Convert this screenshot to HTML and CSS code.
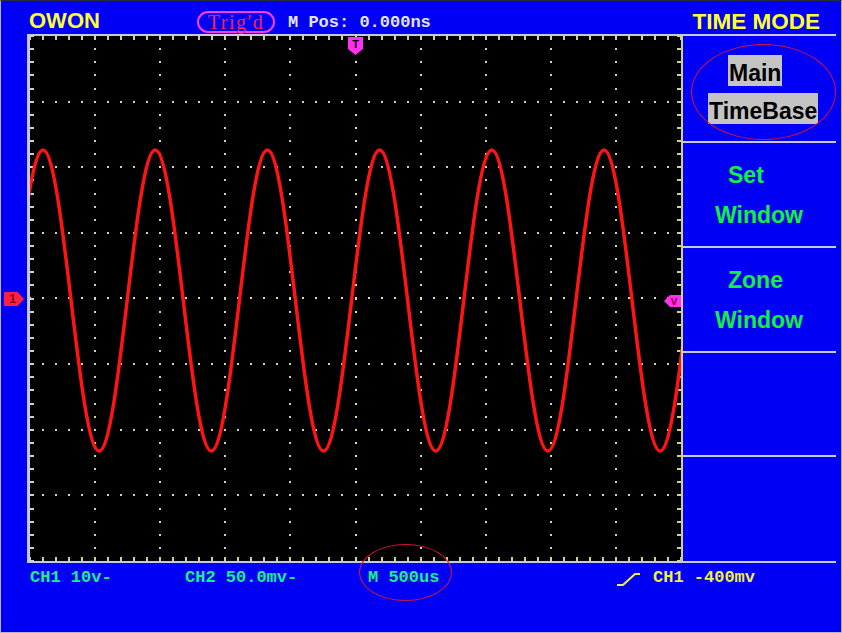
FILE: index.html
```html
<!DOCTYPE html>
<html>
<head>
<meta charset="utf-8">
<link rel="stylesheet" href="styles.css">
</head>
<body>
<div class="screen">
  <header class="topbar">
    <span class="brand">OWON</span>
    <span class="trig">Trig'd</span>
    <span class="mpos">M Pos: 0.000ns</span>
    <span class="mode">TIME MODE</span>
  </header>
  <main class="body">
    <span class="ch-marker">1</span>
    <div class="scope">
      <svg class="grid" width="651" height="525" viewBox="0 0 651 525">
        <line class="tk-h tk-top" x1="0" y1="2" x2="651" y2="2"/>
        <line class="tk-h tk-bot" x1="0" y1="523" x2="651" y2="523"/>
        <line class="tk-v tk-left" x1="2" y1="0" x2="2" y2="525"/>
        <line class="tk-v tk-right" x1="649" y1="0" x2="649" y2="525"/>
        <line class="dv" x1="65" y1="0" x2="65" y2="525"/>
        <line class="dv" x1="130" y1="0" x2="130" y2="525"/>
        <line class="dv" x1="195" y1="0" x2="195" y2="525"/>
        <line class="dv" x1="260" y1="0" x2="260" y2="525"/>
        <line class="dv dc" x1="326" y1="0" x2="326" y2="525"/>
        <line class="dv" x1="391" y1="0" x2="391" y2="525"/>
        <line class="dv" x1="456" y1="0" x2="456" y2="525"/>
        <line class="dv" x1="521" y1="0" x2="521" y2="525"/>
        <line class="dv" x1="586" y1="0" x2="586" y2="525"/>
        <line class="dh" x1="0" y1="66" x2="651" y2="66"/>
        <line class="dh" x1="0" y1="131" x2="651" y2="131"/>
        <line class="dh" x1="0" y1="197" x2="651" y2="197"/>
        <line class="dh dc" x1="0" y1="262" x2="651" y2="262"/>
        <line class="dh" x1="0" y1="328" x2="651" y2="328"/>
        <line class="dh" x1="0" y1="394" x2="651" y2="394"/>
        <line class="dh" x1="0" y1="459" x2="651" y2="459"/>
        <path class="wave" d="M-43.1 415 C-22.7 415 -7.4 114 13 114 S48.7 415 69.1 415 S104.8 114 125.2 114 S160.9 415 181.3 415 S217 114 237.4 114 S273.1 415 293.5 415 S329.2 114 349.6 114 S385.3 415 405.7 415 S441.4 114 461.8 114 S497.5 415 517.9 415 S553.6 114 574 114 S609.7 415 630.1 415 S665.8 114 686.2 114"/>
        <polygon class="mk-t" points="318,1 333,1 333,13 325.5,19 318,13"/>
        <text class="mk-t-label" x="325.5" y="12">T</text>
        <polygon class="mk-v" points="634,265 640,259 651,259 651,271 640,271"/>
        <text class="mk-v-label" x="644" y="269">v</text>
      </svg>
    </div>
    <nav class="menu">
      <div class="item item-sel">
        <span class="hl hl-main">Main</span>
        <span class="hl hl-tb">TimeBase</span>
      </div>
      <div class="item">
        <span class="l1">Set</span>
        <span class="l2">Window</span>
      </div>
      <div class="item">
        <span class="l1">Zone</span>
        <span class="l2">Window</span>
      </div>
      <div class="item"></div>
      <div class="item last"></div>
    </nav>
  </main>
  <footer class="status">
    <span class="st">CH1 10v-</span>
    <span class="st">CH2 50.0mv-</span>
    <span class="st">M 500us</span>
    <svg class="edge" width="25" height="16" viewBox="0 0 25 16"><path d="M1 14 H7 L19 3 H24"/></svg>
    <span class="st trg">CH1 -400mv</span>
  </footer>
  <div class="ring ring-menu"></div>
  <div class="ring ring-tb"></div>
</div>
</body>
</html>
```

FILE: styles.css
```css
* { box-sizing: border-box; }
html, body { margin: 0; padding: 0; background: #0000f6; }

.screen {
  position: relative;
  width: 842px;
  height: 633px;
  background: #0000f6;
  border: 1px solid #b4b4d4;
  border-top-color: #2a2a3a;
  overflow: hidden;
  font-family: "Liberation Sans", Arial, sans-serif;
}

/* header */
.topbar {
  height: 33px;
  display: flex;
  align-items: flex-start;
  padding-left: 28px;
}
.brand {
  width: 168px;
  margin-top: 9px;
  font-weight: bold;
  font-size: 22px;
  line-height: 22px;
  color: #ffff30;
}
.trig {
  margin-top: 10px;
  width: 78px;
  height: 22px;
  border: 2px solid #ff3cff;
  border-radius: 11px;
  display: flex;
  align-items: center;
  justify-content: center;
  font-family: "Liberation Serif", serif;
  font-size: 20px;
  letter-spacing: 1.5px;
  line-height: 18px;
  color: #ff1e50;
}
.mpos {
  margin-left: 13px;
  margin-top: 12px;
  font-family: "Liberation Mono", monospace;
  font-weight: bold;
  font-size: 17px;
  line-height: 20px;
  color: #e4e4ec;
}
.mode {
  margin-left: auto;
  margin-right: 21px;
  margin-top: 10px;
  font-weight: bold;
  font-size: 22.5px;
  line-height: 22px;
  color: #ffff30;
}

/* main area */
.body {
  position: relative;
  display: flex;
  height: 529px;
  width: 809px;
  margin-left: 26px;
  border-top: 2px solid #c8c8e4;
  border-bottom: 2px solid #c8c8e4;
}
.scope {
  width: 656px;
  height: 525px;
  background: #000;
  border-left: 3px solid #c8c8e4;
  border-right: 2px solid #d4d088;
}
.grid { display: block; }

.tk-h, .tk-v, .dv, .dh { shape-rendering: crispEdges; }
.tk-h { stroke: #d6d47a; stroke-width: 4; stroke-dasharray: 2 11.02; stroke-dashoffset: 1; }
.tk-v { stroke: #d0d0d8; stroke-width: 4; stroke-dasharray: 2 11.125; stroke-dashoffset: 1; }
.tk-right { stroke: #d6d47a; }
.dv { stroke: #d4d4a4; stroke-width: 2; stroke-dasharray: 2 11.125; stroke-dashoffset: 1; }
.dh { stroke: #d4d4a4; stroke-width: 2; stroke-dasharray: 2 11.02; stroke-dashoffset: 1; }
.dc { stroke: #e8e878; }
.wave { fill: none; stroke: #ff1414; stroke-width: 3.5; stroke-linejoin: round; }

.mk-t, .mk-v { fill: #ff30f0; }
.mk-t-label {
  font-family: "Liberation Sans", Arial, sans-serif;
  font-weight: bold;
  font-size: 11px;
  text-anchor: middle;
  fill: #000;
}
.mk-v-label {
  font-family: "Liberation Sans", Arial, sans-serif;
  font-weight: bold;
  font-size: 12px;
  text-anchor: middle;
  fill: #a00050;
}

.ch-marker {
  position: absolute;
  left: -23px;
  top: 256px;
  width: 20px;
  height: 14px;
  background: #ff2040;
  clip-path: polygon(0 0, 68% 0, 100% 50%, 68% 100%, 0 100%);
  color: #8a0020;
  font-weight: bold;
  font-size: 13px;
  line-height: 14px;
  padding-left: 5px;
}

/* right-hand menu */
.menu {
  width: 153px;
  display: grid;
  grid-template-rows: 107px 105px 105px 104px 1fr;
}
.item {
  border-bottom: 2px solid #c8c8e4;
  display: flex;
  flex-direction: column;
  align-items: flex-start;
  padding-top: 12px;
  font-weight: bold;
  font-size: 23px;
  line-height: 40px;
  color: #14f040;
}
.item.last { border-bottom: 0; }
.item-sel { padding-top: 19px; }
.hl {
  background: #c4c4c4;
  color: #000;
  font-size: 23px;
  line-height: 26px;
  padding: 5px 1px 0;
}
.hl-main { margin-left: 45px; }
.hl-tb { margin-left: 25px; margin-top: 7px; }
.l1 { margin-left: 45px; }
.l2 { margin-left: 32px; }

/* footer */
.status {
  height: 69px;
  display: grid;
  grid-template-columns: 155px 183px 248px 37px auto;
  align-items: start;
  padding: 5px 0 0 29px;
  font-family: "Liberation Mono", monospace;
  font-weight: bold;
  font-size: 17px;
  line-height: 20px;
  color: #18f08c;
}
.edge { margin-top: 3px; }
.edge path { fill: none; stroke: #f0f040; stroke-width: 2; }
.trg { color: #f0f040; }

/* annotation rings */
.ring {
  position: absolute;
  border: 1.5px solid #d2143c;
  border-radius: 50%;
}
.ring-menu { left: 690px; top: 43px; width: 145px; height: 96px; }
.ring-tb { left: 358px; top: 543px; width: 93px; height: 57px; }
```
